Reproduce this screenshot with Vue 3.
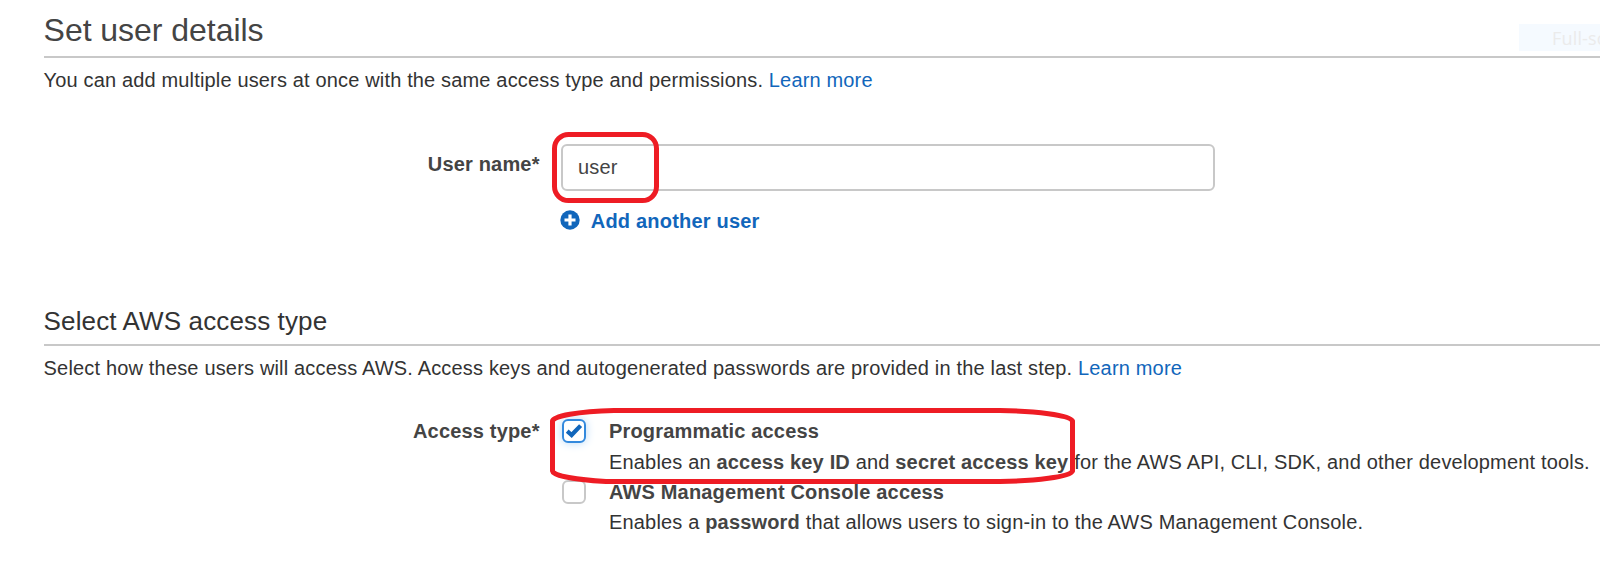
<script setup>
import { ref } from 'vue'

const userName = ref('user')
</script>

<template>
  <main class="page">
    <section class="details">
      <h1>Set user details</h1>
      <p class="intro first">You can add multiple users at once with the same access type and permissions. <a>Learn more</a></p>
      <div class="row name-row">
        <label class="label" for="user-name">User name*</label>
        <div class="field">
          <input id="user-name" v-model="userName" type="text" />
          <a class="add">
            <svg width="20" height="20" viewBox="0 0 20 20">
              <circle cx="10" cy="10" r="9.7" fill="#1166bb" />
              <path d="M10 4.5v11M4.5 10h11" stroke="#fff" stroke-width="3.2" />
            </svg>
            <span>Add another user</span>
          </a>
        </div>
      </div>
    </section>

    <section class="access">
      <h2>Select AWS access type</h2>
      <p class="intro second">Select how these users will access AWS. Access keys and autogenerated passwords are provided in the last step. <a>Learn more</a></p>
      <div class="row access-row">
        <span class="label">Access type*</span>
        <div class="options">
          <div class="option">
            <span class="box checked">
              <svg width="20" height="20" viewBox="0 0 20 20">
                <path d="M3.2 10.2L7.6 14L16.6 4.6" fill="none" stroke="#1166bb" stroke-width="4.2" />
              </svg>
            </span>
            <div>
              <strong class="title">Programmatic access</strong>
              <p>Enables an <b>access key ID</b> and <b>secret access key</b> for the AWS API, CLI, SDK, and other development tools.</p>
            </div>
          </div>
          <div class="option">
            <span class="box"></span>
            <div>
              <strong class="title">AWS Management Console access</strong>
              <p>Enables a <b>password</b> that allows users to sign-in to the AWS Management Console.</p>
            </div>
          </div>
        </div>
      </div>
    </section>

    <div class="snip">Full-screen Snip</div>
    <svg class="marks" width="1600" height="562" viewBox="0 0 1600 562">
      <rect x="554.5" y="134.5" width="102" height="66" rx="14" />
      <path d="M552.5 421C553 416 578 411.5 614 410.5H1000C1035 411 1070 415 1072.5 421V471C1070 477 1035 481 1000 481.5H606C578 480 553 476 552.5 471Z" />
    </svg>
  </main>
</template>

<style>
body { background: #fff; overflow: hidden; }
</style>

<style scoped>
.page {
  position: relative;
  box-sizing: border-box;
  width: 1600px;
  height: 562px;
  padding: 10px 0 0 43.6px;
  overflow: hidden;
  font: 20px/30px "Liberation Sans", Arial, sans-serif;
  letter-spacing: 0.172px;
  color: #333;
}
h1, h2, p { margin: 0; font-weight: 400; white-space: nowrap; }
h1 { height: 46px; border-bottom: 2px solid #c8c8c8; font-size: 32px; line-height: 40px; letter-spacing: -0.04px; color: #444; }
h2 { height: 40px; border-bottom: 2px solid #c8c8c8; font-size: 26px; line-height: 34px; letter-spacing: 0.13px; }
a { color: #1166bb; }
.intro { margin-top: 7px; }
.first { letter-spacing: 0.157px; }
.details { height: 294px; }
.row { display: flex; }
.label { width: 496px; text-align: right; font-weight: 700; color: #444; }
.name-row { margin-top: 49px; }
.name-row .label { padding-top: 5px; }
.field { margin-left: 21.4px; }
input {
  display: block;
  box-sizing: border-box;
  width: 654px;
  height: 47px;
  padding: 0 15px;
  border: 2px solid #c8c8c8;
  border-radius: 6px;
  font: inherit;
  letter-spacing: inherit;
  color: #444;
  outline: none;
}
.add { display: flex; margin-top: 15px; font-weight: 700; letter-spacing: 0.2px; }
.add svg { margin: 3.5px 10.5px 0 -0.7px; }
.access-row { margin-top: 33px; }
.options { margin-left: 22.4px; }
.option { display: flex; height: 60.5px; }
.box {
  box-sizing: border-box;
  width: 24px;
  height: 24px;
  margin: 3px 23px 0 0;
  border: 2px solid #c8c8c8;
  border-radius: 6px;
  background: #fff;
}
.box svg { display: block; }
.checked { border-color: #3389dd; box-shadow: 0 0 10px #b7d8f7; }
.title { display: block; color: #444; }
.option p { padding-top: 0.6px; }
b { color: #444; }
.snip {
  position: absolute;
  left: 1519px;
  top: 24px;
  width: 200px;
  height: 27px;
  padding-left: 33px;
  background: #f5faff;
  color: #ebebeb;
  font: 18px/29px "Open Sans", sans-serif;
}
.marks { position: absolute; left: 0; top: 0; fill: none; stroke: #ee1c24; stroke-width: 5; stroke-linejoin: round; }
</style>
